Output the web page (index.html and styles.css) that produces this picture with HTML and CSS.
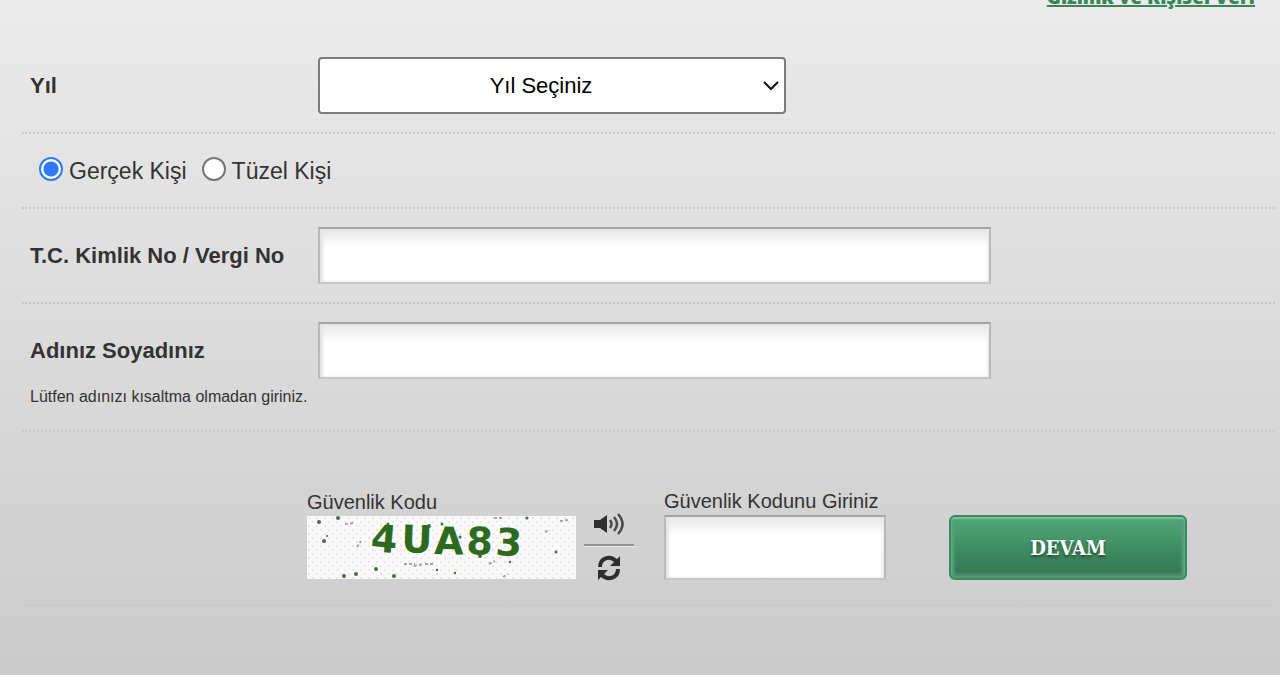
FILE: index.html
```html
<!DOCTYPE html>
<html lang="tr">
<head>
    <meta charset="UTF-8">
    <meta name="viewport" content="width=device-width, initial-scale=1.0">
    <title>Sorgulama</title>
    <link rel="stylesheet" href="styles.css">
</head>
<body>
    <div class="top-link">
        <a href="#gizlilik">Gizlilik ve Kişisel Veri</a>
    </div>

    <form class="query-form" onsubmit="return false">
        <div class="row">
            <label class="row-label" for="year">Yıl</label>
            <div class="select-box">
                <select id="year">
                    <option>Yıl Seçiniz</option>
                </select>
                <svg class="arrow" viewBox="0 0 16 10"><path d="M1 1l7 7 7-7" fill="none" stroke="#111" stroke-width="2"/></svg>
            </div>
        </div>

        <!-- Person type -->
        <div class="row row-radio">
            <input type="radio" name="type" id="real" checked>
            <label for="real">Gerçek Kişi</label>
            <input type="radio" name="type" id="legal">
            <label for="legal">Tüzel Kişi</label>
        </div>

        <div class="row">
            <label class="row-label" for="tckn">T.C. Kimlik No / Vergi No</label>
            <input class="field" type="text" id="tckn">
        </div>

        <div class="row row-name">
            <label class="row-label" for="fullname">Adınız Soyadınız</label>
            <input class="field" type="text" id="fullname">
            <p class="note">Lütfen adınızı kısaltma olmadan giriniz.</p>
        </div>

        <!-- Security code -->
        <div class="row row-captcha">
            <div class="captcha">
                <span class="caption">Güvenlik Kodu</span>
                <svg class="captcha-image" viewBox="0 0 269 63" role="img" aria-label="Güvenlik Kodu">
                    <defs>
                        <pattern id="dots" width="8" height="8" patternUnits="userSpaceOnUse">
                            <rect width="8" height="8" fill="#fafafa"/>
                            <circle cx="2" cy="2" r="1" fill="#edd8ec"/>
                            <circle cx="6" cy="6" r="1" fill="#d9ecd8"/>
                        </pattern>
                    </defs>
                    <rect width="269" height="63" fill="url(#dots)"/>
                    <g fill="#44713f">
                        <circle cx="12" cy="6" r="2"/><circle cx="31" cy="2" r="2"/><circle cx="17" cy="25" r="2"/>
                        <circle cx="20" cy="20" r="1"/><circle cx="37" cy="60" r="2"/><circle cx="49" cy="58" r="2"/>
                        <circle cx="69" cy="53" r="2"/><circle cx="87" cy="60" r="2"/><circle cx="81" cy="8" r="1.5"/>
                        <circle cx="122" cy="10" r="2"/><circle cx="135" cy="8" r="1.5"/><circle cx="153" cy="21" r="1.5"/>
                        <circle cx="173" cy="40" r="2"/><circle cx="203" cy="46" r="1.2"/><circle cx="220" cy="2" r="1.5"/>
                        <circle cx="249" cy="36" r="1.5"/><circle cx="148" cy="57" r="1.2"/><circle cx="130" cy="54" r="1.2"/>
                    </g>
                    <g stroke="#9aa99a" stroke-width="2" stroke-dasharray="3 2" fill="none">
                        <path d="M38 8l9-1M97 48h11M107 50l9-2M118 48h9M50 31l4-6M187 2h9M253 5l8-1M182 48l6-3M238 16l5-2M196 61l5-3"/>
                    </g>
                    <text class="captcha-text" x="63 94 127 159 188" y="35 36 38 38 39" rotate="5 2 1 2 3">4UA83</text>
                </svg>
            </div>

            <div class="captcha-tools">
                <button type="button" aria-label="Sesli dinle">
                    <svg width="32" height="24" viewBox="0 0 32 24">
                        <path d="M1 8h6l7-5v18l-7-5H1z" fill="#2e2e2e"/>
                        <path d="M17 8q3 4 0 8M21 5q6 7 0 14M25 2q9 10 0 20" fill="none" stroke="#4a4a4a" stroke-width="2.5"/>
                    </svg>
                </button>
                <button type="button" aria-label="Kodu yenile">
                    <svg width="26" height="26" viewBox="0 0 26 26">
                        <path d="M4 12C4 3 14 0 20 6M22 14C22 23 12 26 6 20" fill="none" stroke="#2e2e2e" stroke-width="4"/>
                        <path d="M24 1v10H14zM2 25V15h10z" fill="#2e2e2e"/>
                    </svg>
                </button>
            </div>

            <div class="code">
                <label class="caption" for="code">Güvenlik Kodunu Giriniz</label>
                <input class="field" type="text" id="code">
            </div>

            <button class="btn" type="submit">DEVAM</button>
        </div>
    </form>
</body>
</html>
```
FILE: styles.css
```css
* {
    box-sizing: border-box;
}
body {
    margin: 0;
    min-height: 100vh;
    font-family: "Liberation Sans", Arial, sans-serif;
    color: #333;
    background: linear-gradient(#ebebeb, #cbcbcb);
}
.top-link {
    display: flex;
    justify-content: flex-end;
    align-items: flex-end;
    height: 10px;
    padding-right: 25px;
    overflow: hidden;
}
.top-link a {
    font-family: "Open Sans", sans-serif;
    font-size: 19px;
    font-weight: 800;
    line-height: 26px;
    color: #388557;
    text-decoration-thickness: 2px;
}
.query-form {
    padding: 29px 5px 0 22px;
}
.row {
    display: grid;
    grid-template-columns: 288px 1fr;
    align-items: center;
    padding: 18px 0 18px 8px;
    border-bottom: 2px dotted rgba(150, 150, 150, 0.3);
}
.row-label {
    font-size: 22px;
    font-weight: bold;
}
.select-box {
    position: relative;
    width: 468px;
}
select {
    display: block;
    width: 100%;
    height: 57px;
    padding: 0 22px 0 0;
    appearance: none;
    border: 2px solid #7c7c7c;
    border-radius: 4px;
    background: white;
    color: black;
    font-family: inherit;
    font-size: 22px;
    text-align: center;
    text-align-last: center;
}
.arrow {
    position: absolute;
    right: 7px;
    top: 24px;
    width: 16px;
    height: 10px;
    pointer-events: none;
}
.row-radio {
    display: flex;
    padding: 22px 0 20px 17px;
    font-size: 23px;
    line-height: 31px;
}
.row-radio input {
    appearance: none;
    width: 24px;
    height: 24px;
    margin: 0 6px 6px 0;
    border: 2px solid #767676;
    border-radius: 50%;
    background: white;
}
.row-radio input:checked {
    border-color: #2f7bf6;
    background: radial-gradient(circle, #2f7bf6 7px, white 8px);
}
.row-radio label {
    margin-right: 15px;
}
.field {
    width: 673px;
    max-width: 100%;
    height: 57px;
    padding: 0 12px;
    border: 2px solid #b9b9b9;
    border-top-color: #a3a3a3;
    border-bottom-color: #c6c6c6;
    background: linear-gradient(#e6e6e6, white 18px);
    box-shadow: inset 3px 0 3px #e4e4e4, inset -2px 0 2px #ececec;
    font-family: inherit;
    font-size: 22px;
}
.row-name {
    padding-bottom: 23px;
    border-bottom-color: rgba(150, 150, 150, 0.2);
}
.note {
    grid-column: 1 / -1;
    margin: 8px 0 0;
    font-size: 16px;
    line-height: 20px;
}
.row-captcha {
    display: flex;
    align-items: flex-end;
    padding: 55px 0 24px 285px;
    border-bottom-color: rgba(150, 150, 150, 0.1);
}
.caption {
    display: block;
    font-size: 20px;
    line-height: 28px;
}
.captcha-image {
    display: block;
    width: 269px;
    height: 63px;
    margin-bottom: 1px;
}
.captcha-text {
    font-family: "DejaVu Sans", sans-serif;
    font-size: 38px;
    font-weight: bold;
    fill: #2c6b1e;
}
.captcha-tools {
    width: 50px;
    margin: 0 30px 0 8px;
}
.captcha-tools button {
    display: flex;
    justify-content: center;
    align-items: center;
    width: 100%;
    height: 34px;
    padding: 10px 0 0;
    border: none;
    background: none;
    cursor: pointer;
}
.captcha-tools button:first-child {
    padding: 0 0 8px;
    border-bottom: 2px solid #929292;
    box-shadow: 0 1px #eee;
}
.code .field {
    display: block;
    width: 222px;
    height: 65px;
}
.btn {
    width: 238px;
    height: 65px;
    margin-left: 63px;
    border: 2px solid #3b8a5f;
    border-radius: 6px;
    background: linear-gradient(#4fa877, #33734f);
    box-shadow: inset 0 2px 2px #82c2a0, inset 0 -4px 4px #559779, inset 3px 0 3px #5ca37f, inset -3px 0 3px #5ca37f;
    color: white;
    font-family: "DejaVu Serif Condensed", "DejaVu Serif", serif;
    font-size: 20px;
    font-weight: bold;
    text-shadow: 0 2px 3px rgba(0, 0, 0, 0.5);
    cursor: pointer;
}
```
